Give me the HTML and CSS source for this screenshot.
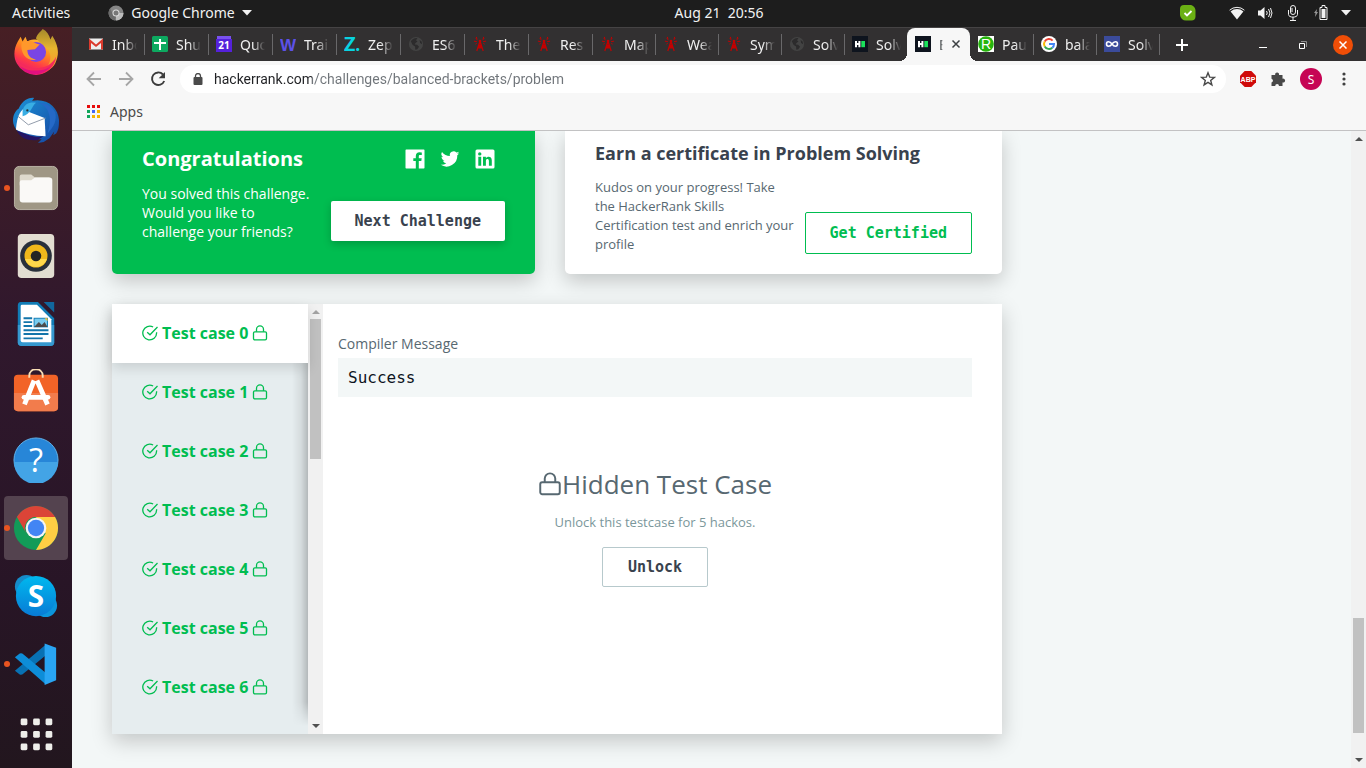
FILE: index.html
```html
<!DOCTYPE html>
<html lang="en">
<head>
<meta charset="utf-8">
<meta name="viewport" content="width=device-width, initial-scale=1">
<title>Balanced Brackets | HackerRank</title>
<link rel="stylesheet" href="styles.css">
</head>
<body>
<svg class="sprite" aria-hidden="true">
  <symbol id="check" viewBox="0 0 16 16"><path d="M14.600 7.200v.8a6.900 6.900 0 1 1-3.500-6" /><path d="M15.500 2 8 9.800 5.200 7.200"/></symbol>
  <symbol id="lock" viewBox="0 0 16 16"><rect x="1.500" y="6.800" width="13" height="8" rx="1.300"/><path d="M4.500 6.800V4.400a3.500 3.500 0 0 1 7 0v2.400"/></symbol>
  <symbol id="tower" viewBox="0 0 16 16"><g fill="none" stroke="#c40000" stroke-width="1.200"><path d="M8 5 4.800 15M8 5l3.200 10M6.500 9.200h3M5.600 12h4.800M6.400 9.300l4.200 3.200M9.600 9.300l-4.200 3.200"/><path d="M5.500 3.800 3.600 2.400M4.900 5.700l-3-.6M10.500 3.800l1.900-1.400M11.100 5.700l3-.6M3.400 8.100l1.300-.6M12.600 8.100l-1.300-.6M4.900 2.900 4.300.9M11.100 2.900l.6-2" stroke-width="1"/></g><circle cx="8" cy="5" r="1.300" fill="#c40000"/></symbol>
  <symbol id="globe" viewBox="0 0 16 16"><circle cx="8" cy="8" r="7.100" fill="#434343"/><path d="M2.800 5.200c2-2.700 4.300-3.400 6.600-3L8 4.200l1.500 1.200-2 1.500-.8 1.500 2.400.4 2 2-1.800 2.500-2 .4-.2-3.200-2.400-1.600zM11.600 4l2 1.400.5 2.800-2-1.200z" fill="#2c2b2c"/></symbol>
  <symbol id="hr" viewBox="0 0 16 16"><path fill="#0e141e" d="M0 0h16v16H0z"/><path fill="#fff" d="M3 5h2v2h1.400V5h2v6.200h-2V9H5v2.200H3z"/><path fill="#1ae25b" d="M9.300 5H13v6.200H9.300z"/></symbol>
</svg>

<header class="topbar">
  <div class="topbar-left">
    <button type="button">Activities</button>
    <button type="button" class="app-menu">
      <svg width="16" height="16" viewBox="0 0 16 16" aria-hidden="true"><circle cx="8" cy="8" r="7.500" fill="#858585"/><path d="M8 8h7.500A7.500 7.500 0 0 1 8 15.500z" fill="#bbb"/><path d="M2 3.600 5 9l3 2-1 4.400A7.500 7.500 0 0 1 2 3.600z" fill="#6b6b6b"/><circle cx="8" cy="8" r="3.500" fill="#ddd"/><circle cx="8" cy="8" r="2.500" fill="#777"/></svg>
      Google Chrome
      <svg width="10" height="6" viewBox="0 0 10 6" aria-hidden="true"><path d="M0 0h10L5 5.500z" fill="#f2f2f2"/></svg>
    </button>
  </div>
  <time class="clock">Aug 21&nbsp; 20:56</time>
  <div class="tray">
    <svg class="skype-status" width="18" height="18" viewBox="0 0 18 18" role="img" aria-label="Online"><path d="M5 1h6c3 0 5.500 2.500 5.500 5.500v6c0 2.500-1.500 4-4 4H7A6 6 0 0 1 1 11V5a4 4 0 0 1 4-4z" fill="#6bb014"/><path d="m5.500 9 2.500 2.500 4.500-4.500" fill="none" stroke="#fff" stroke-width="1.800"/></svg>
    <svg width="16" height="16" viewBox="0 0 16 16" role="img" aria-label="Wi-Fi"><path d="M.6 5.200a11 11 0 0 1 14.800 0" fill="none" stroke="#f2f2f2"/><path d="M1.600 6.600a9.500 9.500 0 0 1 12.800 0L8 14.500z" fill="#f2f2f2"/></svg>
    <svg width="16" height="16" viewBox="0 0 16 16" role="img" aria-label="Volume"><path d="M1 5.500h2.500l4-3.500v12l-4-3.500H1z" fill="#f2f2f2"/><path d="M9.500 6q1.500 2 0 4M11.500 4q3 4 0 8M13.500 3q3 5 0 10" fill="none" stroke="#f2f2f2"/></svg>
    <svg width="16" height="18" viewBox="0 0 16 18" role="img" aria-label="Microphone"><rect x="5.500" y="1.500" width="5" height="9" rx="2.500" fill="none" stroke="#f2f2f2"/><path d="M6 5h2M6 7h2M3.500 6v4.500c0 3.500 9 3.500 9 0V6M8 13v3M5 16.500h6" fill="none" stroke="#f2f2f2"/></svg>
    <svg width="16" height="18" viewBox="0 0 16 18" role="img" aria-label="Battery"><path d="M4 5 1 9h1.500L2 13l3-5H3.500z" fill="#999"/><path d="M7 3.500h2v-2h3v2h2v12H7z" fill="none" stroke="#f2f2f2"/><path d="M8.500 5h4v9h-4z" fill="#f2f2f2"/></svg>
    <svg width="10" height="6" viewBox="0 0 10 6" role="img" aria-label="System menu"><path d="M0 0h10L5 5.500z" fill="#f2f2f2"/></svg>
  </div>
</header>

<div class="desktop">
  <nav class="dock" aria-label="Dock">
    <button type="button" class="slot" aria-label="Firefox"><svg viewBox="0 0 48 48"><defs><linearGradient id="ff" x1=".8" y1="0" x2=".3" y2="1"><stop stop-color="#ffd43a"/><stop offset=".4" stop-color="#ff8a1f"/><stop offset=".7" stop-color="#ff3b47"/><stop offset="1" stop-color="#e5127d"/></linearGradient><linearGradient id="ft" x1="0" y1="0" x2="0" y2="1"><stop stop-color="#a3892b"/><stop offset=".45" stop-color="#e8b52e"/><stop offset="1" stop-color="#ff8f2a"/></linearGradient></defs><path d="M5 13 8 8l2 5 3-5 2 5c3-2 6-2 9-2l20 3c3 7 3 14 0 20a22 22 0 0 1-40 2C0 29 1 20 5 13z" fill="url(#ff)"/><path d="M24 10c1-5 5-7 7-10 4 2 7 6 8 11l2-4c6 9 8 19 3 29-3 6-10 9-16 9 8-4 11-9 11-16 0-9-9-12-15-19z" fill="url(#ft)"/><circle cx="24" cy="24" r="10.500" fill="#7a45e4"/><path d="M9 14c4-2 9-2 13 0 2 1 4 2 6 2l-5 5-8 1c0 5 3 9 9 10-9 2-17-6-15-18z" fill="#ff982b"/><path d="M2 22c0 12 10 19 22 19 9 0 17-4 21-12-1 10-9 18-20 18C11 47 2 36 2 22z" fill="#f52b5b"/><path d="M8 39c8 6 25 6 32-1-8 12-25 12-32 1z" fill="#e0107f"/></svg></button>
    <button type="button" class="slot" aria-label="Thunderbird"><svg viewBox="0 0 48 48"><defs><linearGradient id="tb" x1="0" y1="0" x2="1" y2="1"><stop stop-color="#1c94d8"/><stop offset="1" stop-color="#1543a0"/></linearGradient></defs><path d="M6 12C10 2 19 0 22 1l-2 3c16-3 27 7 28 20 0 5 0 10-3 14l-3 2 1-4-5 7-6 4-6 1 4-4C15 44 1 38 0 25c0-6 2-10 6-13z" fill="url(#tb)"/><path d="M3 34C4 25 5 18 10 13l23 9 1 19C22 41 11 38 3 34z" fill="#fff"/><path d="m5 20 11 9 18-7" fill="none" stroke="#8d98a7"/><path d="M10 14c2-7 7-9 14-8-5 4-5 12-14 14z" fill="#39aee4"/><path d="M26 6c13 4 15 18 10 32 7-7 10-14 8-22-3-6-9-10-18-10z" fill="#2569c7"/><path d="m4 35 11 4c5 2 12 3 17 2l-7 4C16 46 7 43 4 35z" fill="#251565"/><circle cx="15" cy="14" r="1.200" fill="#263038"/></svg></button>
    <button type="button" class="slot running" aria-label="Files"><svg viewBox="0 0 48 48"><rect x="1.500" y="1.500" width="45" height="45" rx="5" fill="#9f9785" stroke="#bbb5a6"/><path d="M7 15v-3q0-2 2-2h10l4 3h15v8H7z" fill="#ded9cc"/><path d="M7 18q0-2 2-2h10l4-3h15q3 0 3 3v20q0 3-3 3H10q-3 0-3-3z" fill="#faf9f7"/></svg></button>
    <button type="button" class="slot" aria-label="Rhythmbox"><svg viewBox="0 0 48 48"><rect x="5" y="1" width="38" height="46" rx="4" fill="#e2ddd1"/><circle cx="24" cy="24" r="16.500" fill="#29303b"/><circle cx="24" cy="24" r="12" fill="#f0b81b"/><path d="M12.500 27a12 12 0 0 0 23 0z" fill="#ffd84b"/><circle cx="24" cy="24" r="5.500" fill="#242424"/></svg></button>
    <button type="button" class="slot" aria-label="LibreOffice Writer"><svg viewBox="0 0 48 48"><path d="M8 1h18l17 17v25q0 4-4 4H9q-4 0-4-4V5q0-4 3-4z" fill="#117cb6"/><path d="M5 25h38v18q0 4-4 4H9q-4 0-4-4z" fill="#3699cf"/><path d="M9 4h16l15 15v24H10q-2 0-2-2V6q0-2 1-2z" fill="#fff"/><path d="m32 1h11v11z" fill="#11679d"/><path d="M11 18h9M11 22h9M11 26h9M11 30.500h26M11 34.500h26M11 39h20" stroke="#1375aa" stroke-width="2"/><rect x="22" y="18" width="14" height="9" fill="#79ccef" stroke="#117cb6"/><path d="m22 27 5-5 3 3 3-3 3 5z" fill="#4c4c4c"/><path d="M33 18h3v3z" fill="#ffc62d"/></svg></button>
    <button type="button" class="slot" aria-label="Ubuntu Software"><svg viewBox="0 0 48 48"><rect x="1" y="6" width="46" height="38" rx="4" fill="#f26327"/><path d="M1 25h46v15q0 4-4 4H5q-4 0-4-4z" fill="#f27c4c"/><path d="M17 9V7c0-9 14-9 14 0v2" fill="none" stroke="#f9deb5" stroke-width="2"/><path d="m22 12-10 25M25 12l11 25" stroke="#fff" stroke-width="5"/><rect x="9" y="27" width="30" height="5" rx="2.500" fill="#fff"/></svg></button>
    <button type="button" class="slot" aria-label="Help"><svg viewBox="0 0 48 48"><circle cx="24" cy="24" r="23" fill="#2786d8" stroke="#61b4ec"/><path d="M1 26h46a23 23 0 0 1-46 0z" fill="#43a4e6"/><text x="24" y="37" text-anchor="middle" class="glyph-help">?</text></svg></button>
    <button type="button" class="slot running active" aria-label="Google Chrome"><svg viewBox="0 0 48 48"><circle cx="24" cy="24" r="23" fill="#129b58"/><path d="M24 47a23 23 0 0 0 19.900-34.500H24l10 17.300z" fill="#ffce44"/><path d="M4.100 12.500A23 23 0 0 1 43.900 12.500H24a11.500 11.500 0 0 0-10 17.300z" fill="#db4437"/><circle cx="24" cy="24" r="10.800" fill="#f5f5f5"/><circle cx="24" cy="24" r="8.500" fill="#4285f4"/></svg></button>
    <button type="button" class="slot" aria-label="Skype"><svg viewBox="0 0 48 48"><defs><linearGradient id="sk" x1="0" y1="0" x2="0" y2="1"><stop stop-color="#00b9ef"/><stop offset="1" stop-color="#087bd5"/></linearGradient></defs><circle cx="14" cy="14" r="12" fill="#168cc9"/><circle cx="34" cy="34" r="12" fill="#0b95dc"/><circle cx="24" cy="24" r="21" fill="url(#sk)"/><text x="24" y="35" text-anchor="middle" class="glyph-skype">S</text></svg></button>
    <button type="button" class="slot running" aria-label="Visual Studio Code"><svg viewBox="0 0 48 48"><path d="m2 31 5 4q2 1 4-1L34 15V4z" fill="#0871b3"/><path d="m2 17 5-4q2-1 4 1l23 19v12z" fill="#0d8dd8"/><path d="M33 2.500 45 7v34l-12 5z" fill="#29a5f3"/></svg></button>
    <button type="button" class="slot" aria-label="Show applications"><svg viewBox="0 0 48 48" fill="#eeeeea"><g id="dots"><rect x="8" y="10" width="7" height="7" rx="1.500"/><rect x="21" y="10" width="7" height="7" rx="1.500"/><rect x="34" y="10" width="7" height="7" rx="1.500"/></g><use href="#dots" y="13"/><use href="#dots" y="26"/></svg></button>
  </nav>

  <div class="browser">
    <div class="tabstrip">
      <div class="tabs">
        <button type="button" class="tab"><svg viewBox="0 0 16 16"><path d="M1 2.500h14v11H1z" fill="#eee"/><path d="M1 13.500v-11l7 6 7-6v11h-2V7L8 11 3 7v6.500z" fill="#db3a2d"/></svg><span>Inbo</span></button>
        <button type="button" class="tab"><svg viewBox="0 0 16 16"><rect width="16" height="16" rx="1.500" fill="#0da960"/><path d="M7 3h2v3h5v2H9v6H7V8H2V6h5z" fill="#fff"/></svg><span>Shu</span></button>
        <button type="button" class="tab"><svg viewBox="0 0 16 16"><path d="M1 0h14v4H1z" fill="#7951ef"/><path d="M0 3h16v13H0z" fill="#5521db"/><text x="8" y="13" text-anchor="middle" class="glyph-small">21</text></svg><span>Quo</span></button>
        <button type="button" class="tab"><svg viewBox="0 0 16 16"><text x="8" y="15" text-anchor="middle" class="glyph-w">W</text></svg><span>Trai</span></button>
        <button type="button" class="tab"><svg viewBox="0 0 16 16"><text x="8" y="15" text-anchor="middle" class="glyph-z">Z.</text></svg><span>Zep</span></button>
        <button type="button" class="tab"><svg><use href="#globe"/></svg><span>ES6</span></button>
        <button type="button" class="tab"><svg><use href="#tower"/></svg><span>The</span></button>
        <button type="button" class="tab"><svg><use href="#tower"/></svg><span>Res</span></button>
        <button type="button" class="tab"><svg><use href="#tower"/></svg><span>Map</span></button>
        <button type="button" class="tab"><svg><use href="#tower"/></svg><span>Wea</span></button>
        <button type="button" class="tab"><svg><use href="#tower"/></svg><span>Sym</span></button>
        <button type="button" class="tab"><svg><use href="#globe"/></svg><span>Solv</span></button>
        <button type="button" class="tab before-active"><svg><use href="#hr"/></svg><span>Solv</span></button>
        <button type="button" class="tab current"><svg><use href="#hr"/></svg><span>B</span><svg class="tab-close" viewBox="0 0 10 10"><path d="m1.500 1.500 7 7m0-7-7 7" stroke="#3c4043" stroke-width="1.500"/></svg></button>
        <button type="button" class="tab"><svg viewBox="0 0 16 16"><path d="M0 0h16v16H0z" fill="#fff"/><circle cx="8" cy="8" r="7.800" fill="#27b50d"/><text x="8" y="13" text-anchor="middle" class="glyph-r">R</text></svg><span>Pau</span></button>
        <button type="button" class="tab"><svg viewBox="0 0 16 16"><circle cx="8" cy="8" r="8" fill="#fff"/><g fill="none" stroke-width="2"><path d="M11.600 4.600A5 5 0 0 0 3.700 5.500" stroke="#ea4335"/><path d="M3.700 5.500a5 5 0 0 0 0 5" stroke="#fbbc05"/><path d="M3.700 10.500a5 5 0 0 0 7.600 1.200" stroke="#34a853"/><path d="M8 8h5c0 1.500-.6 2.800-1.700 3.700" stroke="#4285f4"/></g></svg><span>bala</span></button>
        <button type="button" class="tab"><svg viewBox="0 0 16 16"><path d="M0 0h16v16H0z" fill="#3b4b9b"/><path d="M8 8C6 5 2.500 5 2.500 8S6 11 8 8s5.500-3 5.500 0S10 11 8 8z" fill="none" stroke="#fff" stroke-width="1.600"/></svg><span>Solv</span></button>
      </div>
      <button type="button" class="new-tab" aria-label="New tab"><svg width="12" height="12" viewBox="0 0 12 12"><path d="M6 0v12M0 6h12" stroke="#fff" stroke-width="2"/></svg></button>
      <div class="window-controls">
        <button type="button" aria-label="Minimise"><svg width="8" height="8" viewBox="0 0 8 8"><path d="M0 6.500h8" stroke="#fff"/></svg></button>
        <button type="button" aria-label="Restore"><svg width="8" height="8" viewBox="0 0 8 8" fill="none"><path d="M2 .5h5.500V6" stroke="#8f8f8f"/><path d="M.5 2.500h5v5h-5z" stroke="#fff"/></svg></button>
        <button type="button" class="close" aria-label="Close"><svg width="8" height="8" viewBox="0 0 8 8"><path d="m.5.5 7 7m0-7-7 7" stroke="#fff" stroke-width="1.500"/></svg></button>
      </div>
    </div>

    <div class="toolbar">
      <button type="button" aria-label="Back"><svg width="16" height="16" viewBox="0 0 16 16" fill="none" stroke="#a6a6a6" stroke-width="1.800"><path d="M15 8H2M8 1.500 1.500 8 8 14.500"/></svg></button>
      <button type="button" aria-label="Forward"><svg width="16" height="16" viewBox="0 0 16 16" fill="none" stroke="#a6a6a6" stroke-width="1.800"><path d="M1 8h13M8 1.500 14.500 8 8 14.500"/></svg></button>
      <button type="button" aria-label="Reload"><svg width="16" height="16" viewBox="0 0 16 16"><path d="M13 3.500A6.300 6.300 0 1 0 14.200 10" fill="none" stroke="#3b3b3b" stroke-width="1.900"/><path d="M15 1v6.300H8.700z" fill="#3b3b3b"/></svg></button>
      <div class="omnibox">
        <svg width="10" height="12" viewBox="0 0 10 12" aria-hidden="true"><rect x=".5" y="4" width="9" height="8" rx="1" fill="#4a4a4a"/><path d="M2.500 4.500V3a2.500 2.500 0 0 1 5 0v1.500" fill="none" stroke="#4a4a4a" stroke-width="1.300"/></svg>
        <input type="text" aria-label="Address" value="hackerrank.com/challenges/balanced-brackets/problem">
        <button type="button" aria-label="Bookmark this page"><svg width="16" height="16" viewBox="0 0 16 16"><path d="m8 1.800 1.700 4.300 4.600.3-3.600 3 1.200 4.500L8 11.400l-3.900 2.500 1.200-4.500-3.600-3 4.600-.3z" fill="none" stroke="#4a4a4a" stroke-width="1.400"/></svg></button>
      </div>
      <div class="extensions">
        <button type="button" aria-label="Adblock Plus"><svg width="16" height="16" viewBox="0 0 16 16"><path d="M4.700 0h6.600L16 4.700v6.600L11.300 16H4.700L0 11.300V4.700z" fill="#cf0a0a"/><text x="8" y="11" text-anchor="middle" class="glyph-abp">ABP</text></svg></button>
        <button type="button" aria-label="Extensions"><svg width="16" height="16" viewBox="0 0 16 16"><path d="M1.500 4h3.700a2 2 0 1 1 3.800 0h3.500v3.700a2 2 0 1 1 0 3.800V15H9a1.900 1.900 0 0 0-3.800 0H1.500v-3.600a1.900 1.900 0 0 0 0-3.700z" fill="#484848"/></svg></button>
        <button type="button" class="avatar" aria-label="Profile">S</button>
        <button type="button" aria-label="Menu"><svg width="4" height="14" viewBox="0 0 4 14" fill="#404040"><circle cx="2" cy="2" r="1.600"/><circle cx="2" cy="7" r="1.600"/><circle cx="2" cy="12" r="1.600"/></svg></button>
      </div>
    </div>

    <div class="bookmarks">
      <a href="#apps"><svg width="14" height="14" viewBox="0 0 14 14" aria-hidden="true"><path d="M0 0h3v3H0zM5 0h3v3H5zM10 0h3v3h-3z" fill="#e70c0c"/><path d="M0 5h3v3H0zM0 10h3v3H0z" fill="#10a65a"/><path d="M5 5h3v3H5z" fill="#4267f5"/><path d="M10 5h3v3h-3zM5 10h3v3H5zM10 10h3v3h-3z" fill="#f5b400"/></svg>Apps</a>
    </div>

    <div class="viewport">
      <main class="page">
        <div class="cards">
          <section class="card congrats">
            <div class="card-head">
              <h2>Congratulations</h2>
              <div class="social">
                <a href="#facebook" aria-label="Facebook"><svg viewBox="0 0 20 20"><path fill-rule="evenodd" d="M1.200.5h17.600q.7 0 .7.700v17.600q0 .7-.7.700h-5v-7.400h2.500l.4-2.900h-2.900V7.400c0-.9.300-1.400 1.400-1.400h1.600V3.400l-2.300-.1c-2.300 0-3.700 1.300-3.700 3.900v2H8.300v2.900h2.500v7.400H1.200q-.7 0-.7-.7V1.200q0-.7.700-.7z"/></svg></a>
                <a href="#twitter" aria-label="Twitter"><svg viewBox="0 0 20 20"><path d="M19.300 4.200a7.500 7.500 0 0 1-2.200.6 3.800 3.800 0 0 0 1.700-2.100 7.500 7.500 0 0 1-2.400.9 3.800 3.800 0 0 0-6.500 3.500A10.800 10.800 0 0 1 2 3.100a3.800 3.800 0 0 0 1.200 5.100 3.800 3.800 0 0 1-1.700-.5c0 1.900 1.300 3.400 3 3.800a3.800 3.800 0 0 1-1.700.1 3.800 3.800 0 0 0 3.500 2.600A7.600 7.600 0 0 1 .7 15.800a10.800 10.800 0 0 0 16.600-9.600 7.700 7.700 0 0 0 2-2z"/></svg></a>
                <a href="#linkedin" aria-label="LinkedIn"><svg viewBox="0 0 20 20"><path fill-rule="evenodd" d="M2 .5h16q1.500 0 1.500 1.500v16q0 1.500-1.500 1.500H2Q.5 19.500.5 18V2Q.5.500 2 .5zM3.300 7.800v8.900h2.900V7.800zM4.750 3.200a1.700 1.700 0 1 0 0 3.400 1.700 1.700 0 0 0 0-3.400zM8 7.800v8.900h2.900v-4.800c0-2.600 3-2.500 3 0v4.800h2.900v-5.300c0-4.400-4.400-4.400-5.900-2.200V7.800z"/></svg></a>
              </div>
            </div>
            <div class="card-body">
              <p>You solved this challenge. Would you like to challenge your friends?</p>
              <button type="button" class="btn btn-white">Next Challenge</button>
            </div>
          </section>
          <section class="card certificate">
            <h2>Earn a certificate in Problem Solving</h2>
            <div class="card-body">
              <p>Kudos on your progress! Take the HackerRank Skills Certification test and enrich your profile</p>
              <button type="button" class="btn btn-outline">Get Certified</button>
            </div>
          </section>
        </div>

        <section class="results">
          <div class="cases">
            <button type="button" class="case selected"><svg><use href="#check"/></svg><span>Test case 0</span><svg><use href="#lock"/></svg></button>
            <button type="button" class="case"><svg><use href="#check"/></svg><span>Test case 1</span><svg><use href="#lock"/></svg></button>
            <button type="button" class="case"><svg><use href="#check"/></svg><span>Test case 2</span><svg><use href="#lock"/></svg></button>
            <button type="button" class="case"><svg><use href="#check"/></svg><span>Test case 3</span><svg><use href="#lock"/></svg></button>
            <button type="button" class="case"><svg><use href="#check"/></svg><span>Test case 4</span><svg><use href="#lock"/></svg></button>
            <button type="button" class="case"><svg><use href="#check"/></svg><span>Test case 5</span><svg><use href="#lock"/></svg></button>
            <button type="button" class="case"><svg><use href="#check"/></svg><span>Test case 6</span><svg><use href="#lock"/></svg></button>
          </div>
          <div class="scrollbar list-scroll" aria-hidden="true"><i class="arrow up muted"></i><div class="track"><div class="thumb"></div></div><i class="arrow down"></i></div>
          <div class="output">
            <h3>Compiler Message</h3>
            <pre>Success</pre>
            <div class="hidden-case">
              <h4><svg><use href="#lock"/></svg>Hidden Test Case</h4>
              <p>Unlock this testcase for 5 hackos.</p>
              <button type="button" class="btn btn-grey">Unlock</button>
            </div>
          </div>
        </section>
      </main>
      <div class="scrollbar page-scroll" aria-hidden="true"><i class="arrow up"></i><div class="track"><div class="thumb"></div></div><i class="arrow down"></i></div>
    </div>
  </div>
</div>
</body>
</html>
```

FILE: styles.css
```css
* { box-sizing: border-box; }

body {
  margin: 0;
  height: 100vh;
  display: flex;
  flex-direction: column;
  overflow: hidden;
  font-family: "Open Sans", "Noto Sans", sans-serif;
  font-size: 14px;
  color: #39424e;
}

button, input { font: inherit; }

button {
  display: flex;
  align-items: center;
  justify-content: center;
  margin: 0;
  padding: 0;
  border: 0;
  background: none;
  color: inherit;
}

h2, h3, h4, p, pre { margin: 0; }

.sprite { display: none; }

/* Desktop top bar */
.topbar {
  flex: none;
  height: 27px;
  display: grid;
  grid-template-columns: 1fr auto 1fr;
  align-items: center;
  padding: 0 15px 2px 12px;
  background: #1d1d1d;
  color: #f2f2f2;
  font-family: "Noto Sans", sans-serif;
}

.topbar-left { display: flex; gap: 38px; }
.app-menu { gap: 7px; }
.clock { padding-left: 75px; }
.tray { display: flex; align-items: center; justify-content: flex-end; gap: 12px; }
.skype-status { margin-right: 20px; }

.desktop { flex: 1; min-height: 0; display: flex; }

/* Dock */
.dock {
  flex: none;
  width: 72px;
  display: flex;
  flex-direction: column;
  justify-content: flex-end;
  align-items: center;
  gap: 4px;
  padding-bottom: 4px;
  overflow: hidden;
  background: linear-gradient(#471f24, #30182d 40%, #281526 75%, #22161e);
}

.slot {
  position: relative;
  flex: none;
  width: 64px;
  height: 64px;
  border-radius: 4px;
}

.slot svg { width: 46px; height: 46px; }
.slot.active { background: #54434f; }

.slot.running::before {
  content: "";
  position: absolute;
  left: 0;
  top: 29px;
  width: 6px;
  height: 6px;
  border-radius: 50%;
  background: #e95420;
}

.glyph-help { font: 34px "Open Sans", sans-serif; fill: #fff; }
.glyph-skype { font: bold 31px "Noto Sans", sans-serif; fill: #fff; }
.glyph-small { font: bold 10px "Open Sans", sans-serif; fill: #fff; }
.glyph-w { font: bold 17px "Liberation Sans", sans-serif; fill: #5d51e8; }
.glyph-z { font: 900 19px Lato, sans-serif; fill: #08d3e0; }
.glyph-r { font: 14px "Liberation Sans", sans-serif; fill: #fff; }
.glyph-abp { font: bold 7px "Liberation Sans", sans-serif; fill: #fff; }

/* Browser frame */
.browser {
  flex: 1;
  min-width: 0;
  display: flex;
  flex-direction: column;
  background: #f7f7f7;
  font-family: "Noto Sans", sans-serif;
}

.tabstrip {
  flex: none;
  height: 34px;
  display: flex;
  padding: 0 13px 0 8px;
  border-top: 1px solid #454344;
  background: #323031;
  color: #f0f0f0;
}

.tabs {
  display: grid;
  grid-template-columns: repeat(8, 64px) repeat(9, 63px);
}

.tab {
  position: relative;
  justify-content: flex-start;
  gap: 8px;
  padding-left: 8px;
  padding-bottom: 1px;
}

.tab::after {
  content: "";
  position: absolute;
  right: -1px;
  top: 6px;
  width: 1px;
  height: 21px;
  background: #69686a;
}

.tab.before-active::after { display: none; }
.tab svg { flex: none; width: 16px; height: 16px; }

.tab span {
  width: 25px;
  overflow: hidden;
  white-space: pre;
  text-align: left;
  mask-image: linear-gradient(90deg, #000 50%, transparent);
}

.tab.current {
  border-radius: 8px 8px 0 0;
  background: #f7f7f7;
  color: #3c4043;
}

.tab.current::before,
.tab.current::after {
  content: "";
  position: absolute;
  display: block;
  top: auto;
  bottom: 0;
  width: 8px;
  height: 8px;
}

.tab.current::before { left: -8px; background: radial-gradient(circle at 0 0, transparent 8px, #f7f7f7 8px); }
.tab.current::after { right: -8px; background: radial-gradient(circle at 100% 0, transparent 8px, #f7f7f7 8px); }
.tab.current span { width: 4px; }
.tab.current .tab-close { width: 10px; height: 10px; }

.new-tab { width: 45px; }
.window-controls { display: flex; align-items: center; gap: 20px; margin-left: auto; }
.window-controls button { width: 20px; height: 20px; border-radius: 50%; }
.window-controls .close { background: #f04e07; }

.toolbar {
  flex: none;
  height: 36px;
  display: flex;
  align-items: center;
  gap: 16px;
  padding: 0 14px 0 14px;
}

.omnibox {
  flex: 1;
  min-width: 0;
  height: 28px;
  display: flex;
  align-items: center;
  gap: 11px;
  margin-left: -2px;
  padding: 0 10px 0 13px;
  border-radius: 14px;
  background: #fff;
}

.omnibox input {
  flex: 1;
  min-width: 0;
  padding: 0;
  border: 0;
  outline: 0;
  font-family: Roboto, sans-serif;
  color: transparent;
  background: linear-gradient(90deg, #202124 98px, #70757a 98px);
  background-clip: text;
}

.extensions { display: flex; align-items: center; gap: 14px; margin-left: -2px; }
.extensions button { min-width: 16px; }

.extensions .avatar {
  width: 22px;
  height: 22px;
  border-radius: 50%;
  background: #c60554;
  color: #fff;
  font-size: 12px;
}

.bookmarks {
  flex: none;
  height: 34px;
  padding: 0 15px;
  display: flex;
  align-items: center;
  border-bottom: 1px solid #c2c2c3;
}

.bookmarks a {
  display: flex;
  align-items: center;
  gap: 9px;
  padding-bottom: 4px;
  color: #4a4a4a;
  text-decoration: none;
}

/* Scrollbars */
.viewport { flex: 1; min-height: 0; display: flex; }

.scrollbar {
  flex: none;
  width: 15px;
  display: flex;
  flex-direction: column;
  align-items: center;
  padding: 6px 0;
  background: #f1f1f1;
}

.arrow { border: 4px solid transparent; border-top: 0; border-bottom: 4px solid #505050; }
.arrow.down { border-top: 4px solid #505050; border-bottom: 0; }
.arrow.muted { border-bottom-color: #a3a3a3; }

.track {
  flex: 1;
  width: 11px;
  margin: 5px 0;
  display: flex;
  flex-direction: column;
}

.thumb { background: #c1c1c1; }
.list-scroll .thumb { height: 35%; }
.page-scroll .thumb { height: 19%; margin-top: auto; margin-bottom: 20px; }

/* Challenge page */
.page {
  flex: 1;
  min-width: 0;
  overflow: hidden;
  padding: 0 40px;
  background: #f3f7f7;
  font-family: "Open Sans", "Noto Sans", sans-serif;
}

.cards {
  max-width: 890px;
  display: grid;
  grid-template-columns: 423fr 437fr;
  gap: 30px;
}

.card {
  min-height: 143px;
  padding: 0 30px;
  border-radius: 0 0 5px 5px;
  box-shadow: 0 7px 20px rgba(0, 0, 0, 0.2);
}

.card-body { display: flex; justify-content: space-between; }
.card-body p { line-height: 19px; }

.congrats { padding-top: 14px; background: #00bd50; color: #fff; }
.congrats h2 { font-size: 20px; line-height: 28px; font-weight: 700; }
.congrats .card-body { align-items: flex-start; }
.congrats p { width: 170px; padding-top: 11px; }
.card-head { display: flex; justify-content: space-between; align-items: center; }
.social { display: flex; gap: 15px; padding-right: 10px; }
.social a, .social svg { display: block; width: 20px; height: 20px; fill: #fff; }

.certificate { padding-top: 9px; background: #fff; }
.certificate h2 { font-size: 18px; line-height: 26px; font-weight: 700; color: #39424e; }
.certificate p { width: 200px; padding-top: 12px; font-size: 13px; color: #576871; }
.certificate .card-body { align-items: flex-end; }

.btn {
  height: 40px;
  padding: 0 25px;
  border: 1px solid transparent;
  border-radius: 2px;
  font: bold 15px "DejaVu Sans Mono", monospace;
  color: #39424e;
  white-space: nowrap;
}

.btn-white { margin-top: 28px; padding: 0 23px; background: #fff; box-shadow: 0 3px 8px rgba(0, 0, 0, 0.2); }
.btn-outline { height: 42px; padding: 0 24px; border-color: #00bd50; color: #00bd50; background: #fff; }
.btn-grey { border-color: #b7c9cc; background: #fff; }

.results {
  max-width: 890px;
  min-height: 430px;
  display: flex;
  margin-top: 30px;
  background: #fff;
  box-shadow: 0 7px 20px rgba(0, 0, 0, 0.2);
}

.cases {
  position: relative;
  flex: none;
  width: 196px;
  background: #e6edef;
}

/* Shade cast on the list by the output panel */
.cases::after {
  content: "";
  position: absolute;
  inset: 59px 0 0 auto;
  width: 16px;
  background: linear-gradient(270deg, rgba(0, 0, 0, 0.22), rgba(0, 0, 0, 0.07) 7px, transparent);
  mask-image: linear-gradient(0deg, transparent 8px, #000 32px);
}

.case {
  width: 100%;
  height: 59px;
  justify-content: flex-start;
  gap: 4px;
  padding: 0 0 2px 30px;
  color: #00bd50;
  font-size: 16px;
  font-weight: 700;
}

.case svg { width: 16px; height: 16px; fill: none; stroke: currentColor; stroke-width: 1.3; }
.case.selected { background: #fff; box-shadow: 0 5px 12px rgba(0, 0, 0, 0.13); }

.output { flex: 1; min-width: 0; padding: 30px 30px 30px 15px; }
.output h3 { font-size: 14px; line-height: 20px; font-weight: 400; color: #576871; }

.output pre {
  margin-top: 4px;
  padding: 10px;
  background: #f3f7f7;
  color: #0e141e;
  font: 16px/19px "DejaVu Sans Mono", monospace;
}

.hidden-case {
  display: flex;
  flex-direction: column;
  align-items: center;
  margin-top: 69px;
}

.hidden-case h4 {
  display: flex;
  align-items: center;
  font-size: 26px;
  line-height: 36px;
  font-weight: 400;
  color: #576871;
}

.hidden-case h4 svg { width: 24px; height: 26px; fill: none; stroke: currentColor; stroke-width: 1.3; }
.hidden-case p { margin: 11px 0 15px; font-size: 13px; line-height: 19px; color: #7b979b; }
```
